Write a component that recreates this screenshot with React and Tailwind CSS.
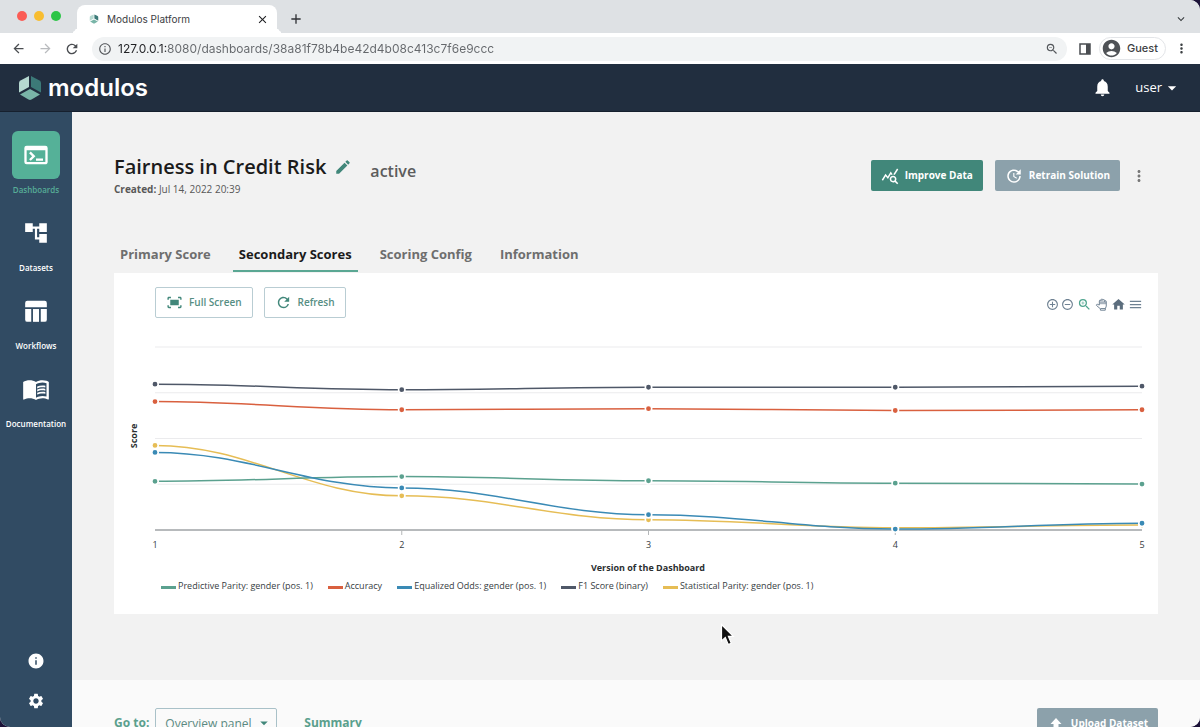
import { useState } from "react";
import {
  MdAccountCircle,
  MdAccountTree,
  MdAddCircleOutline,
  MdArrowBack,
  MdArrowDropDown,
  MdArrowForward,
  MdClose,
  MdEdit,
  MdExpandMore,
  MdFitScreen,
  MdHome,
  MdInfo,
  MdInfoOutline,
  MdMenu,
  MdMenuBook,
  MdMoreVert,
  MdNotifications,
  MdQueryStats,
  MdRefresh,
  MdRemoveCircleOutline,
  MdSettings,
  MdTerminal,
  MdUpdate,
  MdAdd,
  MdZoomIn,
  MdZoomOut,
} from "react-icons/md";

const navItems = [
  { label: "Dashboards", icon: MdTerminal, size: "size-7" },
  { label: "Datasets", icon: MdAccountTree, size: "size-[26px]" },
  { label: "Workflows", icon: TableIcon, size: "size-[26px]" },
  { label: "Documentation", icon: MdMenuBook, size: "size-7" },
];

const tabs = ["Primary Score", "Secondary Scores", "Scoring Config", "Information"];

const series = [
  { name: "Predictive Parity: gender (pos. 1)", color: "#5ba18f", data: [0.266, 0.292, 0.269, 0.256, 0.251] },
  { name: "Accuracy", color: "#d9603f", data: [0.702, 0.657, 0.663, 0.653, 0.657] },
  { name: "Equalized Odds: gender (pos. 1)", color: "#3a8ab5", data: [0.424, 0.23, 0.084, 0.005, 0.037] },
  { name: "F1 Score (binary)", color: "#4f5868", data: [0.797, 0.767, 0.78, 0.78, 0.786] },
  { name: "Statistical Parity: gender (pos. 1)", color: "#e6bd55", data: [0.462, 0.187, 0.056, 0.012, 0.027] },
];

// plot area inside the chart's viewBox
const LEFT = 41;
const RIGHT = 1028;
const BASE = 200;
const HEIGHT = 183;

const xAt = (i) => LEFT + ((RIGHT - LEFT) / 4) * i;
const yAt = (v) => BASE - v * HEIGHT;

const smoothPath = (data) =>
  data.reduce((d, v, i) => {
    if (i === 0) return `M${xAt(0)} ${yAt(v)}`;
    const bend = (xAt(1) - xAt(0)) * 0.38;
    return `${d} C${xAt(i - 1) + bend} ${yAt(data[i - 1])} ${xAt(i) - bend} ${yAt(v)} ${xAt(i)} ${yAt(v)}`;
  }, "");

function TableIcon({ className }) {
  return (
    <svg viewBox="0 0 24 24" fill="currentColor" className={className}>
      <path d="M2 8.500V4.500A2 2 0 0 1 4 2.500H20A2 2 0 0 1 22 4.500V8.500Z" />
      <path d="M2 10.200H7.600V22H4A2 2 0 0 1 2 20Z" />
      <path d="M9.200 10.200H14.800V22H9.200Z" />
      <path d="M16.400 10.200H22V20A2 2 0 0 1 20 22H16.400Z" />
    </svg>
  );
}

function HandIcon({ className }) {
  return (
    <svg viewBox="0 0 24 24" className={className}>
      <path
        d="M8 13V5.500a1.600 1.600 0 0 1 3.200 0V3.600a1.600 1.600 0 0 1 3.200 0V4.500a1.600 1.600 0 0 1 3.200 0V6.500a1.600 1.600 0 0 1 3.200 0V15L19 20V22.500H10V20L2.500 13.500C2 12 4 11 5.500 12Z"
        fill="#fff"
        stroke="currentColor"
        strokeWidth="1.800"
        strokeLinejoin="round"
      />
      <path d="M8.500 6H20.500V11.500H8.500Z" fill="currentColor" opacity="0.6" />
      <path d="M10 19.500H19" stroke="currentColor" strokeWidth="1.800" />
    </svg>
  );
}

function LogoMark({ className }) {
  return (
    <svg viewBox="0 0 24 26" className={className}>
      <path d="M11 1 2.500 5.500Q1 6.300 1 8V17.500L11 12Z" fill="#b5d8d0" />
      <path d="M13 1 21.500 5.500Q23 6.300 23 8V17.500L13 12Z" fill="#3c7a78" />
      <path d="M12 14 22 19.500 13.500 24.500Q12 25.300 10.500 24.500L2 19.500Z" fill="#79b5a8" />
    </svg>
  );
}

function BrowserBar() {
  return (
    <div className="shrink-0 font-['Inter',sans-serif] text-[#3c4043]">
      <div className="flex h-[33px] items-end bg-[#dee1e4] pl-[17px]">
        <div className="mb-3 flex gap-[7px]">
          <span className="size-[10px] rounded-full bg-[#fb5c55]" />
          <span className="size-[10px] rounded-full bg-[#f8bd30]" />
          <span className="size-[10px] rounded-full bg-[#2dc547]" />
        </div>
        <div className="relative ml-4 flex h-7 w-[200px] items-center rounded-t-lg bg-white px-3 before:absolute before:bottom-0 before:-left-2 before:size-2 before:rounded-br-lg before:shadow-[4px_4px_0_white] before:[clip-path:inset(0)] after:absolute after:-right-2 after:bottom-0 after:size-2 after:rounded-bl-lg after:shadow-[-4px_4px_0_white] after:[clip-path:inset(0)]">
          <LogoMark className="size-[10px]" />
          <span className="ml-2 text-[10px]">Modulos Platform</span>
          <button aria-label="Close tab" className="ml-auto -mr-1">
            <MdClose className="size-[13px] text-[#202124]" />
          </button>
        </div>
        <button aria-label="New tab" className="mb-[6px] ml-[11px]">
          <MdAdd className="size-4 text-[#303236]" />
        </button>
        <button aria-label="Search tabs" className="mr-3 mb-[7px] ml-auto">
          <MdExpandMore className="size-[14px]" />
        </button>
      </div>

      <div className="flex h-[31px] items-center bg-white pr-[11px] pl-[11px]">
        <button aria-label="Back">
          <MdArrowBack className="size-[15px] text-[#4a4d51]" />
        </button>
        <button aria-label="Forward" className="ml-3">
          <MdArrowForward className="size-[15px] text-[#b9bbbe]" />
        </button>
        <button aria-label="Reload" className="ml-[11px]">
          <MdRefresh className="size-4 text-[#4a4d51]" />
        </button>
        <div className="ml-3 flex h-6 flex-1 items-center rounded-full bg-[#f1f3f4] pr-2 pl-[6px]">
          <MdInfoOutline className="size-[14px] text-[#55585c]" />
          <input
            aria-label="Address"
            defaultValue="127.0.0.1:8080/dashboards/38a81f78b4be42d4b08c413c7f6e9ccc"
            className="ml-[6px] flex-1 bg-linear-to-r from-[#202124] from-[49px] to-[#65686c] to-[49px] bg-clip-text text-[12px] text-transparent outline-none"
          />
          <MdZoomOut className="size-[14px] text-[#55585c]" />
        </div>
        <button aria-label="Side panel" className="ml-3">
          <svg viewBox="0 0 12 12" className="size-3">
            <path d="M1 1H11V11H1Z" fill="none" stroke="#4a4d51" strokeWidth="1.500" />
            <path d="M7 1H11V11H7Z" fill="#4a4d51" />
          </svg>
        </button>
        <button className="ml-2 flex h-[23px] items-center rounded-full border border-[#e3e5e8] pr-[7px] pl-px text-[11px] font-medium">
          <MdAccountCircle className="mr-[5px] size-[21px] text-[#4f5256]" />
          Guest
        </button>
        <button aria-label="Browser menu" className="ml-2">
          <MdMoreVert className="size-[15px]" />
        </button>
      </div>
    </div>
  );
}

function Header() {
  return (
    <header className="flex h-12 shrink-0 items-center border-b border-[#16202e] bg-[#212e3f] pr-[18px] pl-[18px] text-white">
      <a href="#home" className="flex items-center">
        <LogoMark className="h-[26px] w-6" />
        <span className="ml-[6px] font-['Inter',sans-serif] text-[24px] leading-6 font-semibold">modulos</span>
      </a>
      <button aria-label="Notifications" className="ml-auto">
        <MdNotifications className="size-[21px]" />
      </button>
      <button className="ml-[22px] flex items-center text-[13px]">
        user
        <MdArrowDropDown className="size-5" />
      </button>
    </header>
  );
}

function Sidebar() {
  return (
    <nav className="flex w-[72px] shrink-0 flex-col items-center bg-[#314b63] pt-[19px] pb-[17px] text-white">
      <div className="flex flex-col gap-[11px]">
        {navItems.map(({ label, icon: Icon, size }, i) => (
          <a key={label} href={`#${label.toLowerCase()}`} className="flex flex-col items-center">
            <span
              className={
                i === 0
                  ? "flex size-12 items-center justify-center rounded-md bg-[#55b198]"
                  : "flex size-12 items-center justify-center"
              }
            >
              <Icon className={size} />
            </span>
            <span
              className={
                i === 0
                  ? "mt-[3px] text-[8px] leading-4 font-semibold text-[#57ad97]"
                  : "mt-[3px] text-[8px] leading-4 font-semibold"
              }
            >
              {label}
            </span>
          </a>
        ))}
      </div>
      <div className="mt-auto flex flex-col gap-[22px]">
        <a href="#info" aria-label="Info">
          <MdInfo className="size-[18px]" />
        </a>
        <a href="#settings" aria-label="Settings">
          <MdSettings className="size-[18px]" />
        </a>
      </div>
    </nav>
  );
}

function Chart() {
  // last series goes underneath the others
  const drawn = [series[4], series[0], series[1], series[2], series[3]];

  return (
    <svg viewBox="0 0 1044 224" className="block w-full" role="img" aria-label="Secondary scores by version">
      {[0.25, 0.5, 0.75, 1].map((v) => (
        <line key={v} x1={LEFT} x2={RIGHT} y1={yAt(v)} y2={yAt(v)} stroke="#ebebed" />
      ))}
      <line x1={LEFT} x2={RIGHT} y1={BASE} y2={BASE} stroke="#9fa3a6" strokeWidth="1.500" />
      {[1, 2, 3].map((i) => (
        <line key={i} x1={xAt(i)} x2={xAt(i)} y1={BASE} y2={BASE + 5} stroke="#b4b7b9" />
      ))}
      {drawn.map((s) => (
        <path key={s.name} d={smoothPath(s.data)} fill="none" stroke={s.color} strokeWidth="1.500" />
      ))}
      {drawn.map((s) =>
        s.data.map((v, i) => (
          <circle
            key={`${s.name}-${i}`}
            cx={xAt(i)}
            cy={yAt(v)}
            r="3.200"
            fill={s.color}
            stroke="#fff"
            strokeWidth="1.600"
          />
        ))
      )}
      {[1, 2, 3, 4, 5].map((n, i) => (
        <text key={n} x={xAt(i)} y="218" textAnchor="middle" fontSize="9" fill="#373d3f">
          {n}
        </text>
      ))}
      <text
        x="23"
        y="106"
        textAnchor="middle"
        fontSize="9"
        fontWeight="700"
        fill="#2b2f31"
        transform="rotate(-90 23 106)"
      >
        Score
      </text>
    </svg>
  );
}

function ChartTools() {
  return (
    <div className="mt-1 flex items-center gap-[2px] text-[#6e8192]">
      <button aria-label="Zoom in">
        <MdAddCircleOutline className="size-[13px]" />
      </button>
      <button aria-label="Zoom out">
        <MdRemoveCircleOutline className="size-[13px]" />
      </button>
      <button aria-label="Selection zoom" className="ml-px">
        <MdZoomIn className="size-[15px] text-[#4fa58f]" />
      </button>
      <button aria-label="Pan" className="ml-px">
        <HandIcon className="size-[13px]" />
      </button>
      <button aria-label="Reset zoom" className="ml-px">
        <MdHome className="size-[15px] text-[#5b6d7d]" />
      </button>
      <button aria-label="Chart menu">
        <MdMenu className="size-[15px]" />
      </button>
    </div>
  );
}

export default function App() {
  const [tab, setTab] = useState("Secondary Scores");

  return (
    <div className="h-screen bg-[#1c1238]">
      <div className="relative flex h-full flex-col overflow-hidden rounded-tr-[10px] rounded-b-[10px] bg-[#f2f2f2] font-['Open_Sans',sans-serif]">
        <BrowserBar />
        <Header />

        <div className="flex min-h-0 flex-1">
          <Sidebar />

          <main className="min-w-0 flex-1 overflow-hidden">
            <section className="px-[42px] pt-[41px] pb-[66px]">
              <div className="flex items-start">
                <div>
                  <div className="flex h-7 items-center">
                    <h1 className="text-[20px] font-semibold text-[#1b1b1b]">Fairness in Credit Risk</h1>
                    <button aria-label="Rename" className="ml-2">
                      <MdEdit className="size-[18px] text-[#41877a]" />
                    </button>
                  </div>
                  <p className="text-[10px] leading-4 text-[#585858]">
                    <b className="font-bold">Created:</b> Jul 14, 2022 20:39
                  </p>
                </div>
                <span className="mt-[6px] ml-[18px] text-[16px] leading-6 font-semibold text-[#5c5c5c]">active</span>
                <div className="mt-[7px] ml-auto flex items-center">
                  <button className="flex h-[31px] items-center gap-[6px] rounded-xs bg-[#41877a] px-[10px] text-[10px] font-bold text-white">
                    <MdQueryStats className="size-[18px]" />
                    Improve Data
                  </button>
                  <button className="ml-3 flex h-[31px] items-center gap-[6px] rounded-xs bg-[#8ca1ab] px-[10px] text-[10px] font-bold text-white">
                    <MdUpdate className="size-[18px]" />
                    Retrain Solution
                  </button>
                  <button aria-label="More actions" className="mr-[10px] ml-[10px]">
                    <MdMoreVert className="size-[18px] text-[#777]" />
                  </button>
                </div>
              </div>

              <div role="tablist" className="mt-10 flex gap-4">
                {tabs.map((t) => (
                  <button
                    key={t}
                    role="tab"
                    aria-selected={t === tab}
                    onClick={() => setTab(t)}
                    className={
                      t === tab
                        ? "h-[35px] border-b-2 border-[#5aa793] px-[6px] pt-[2px] text-[13px] font-bold text-[#1b1b1b]"
                        : "h-[35px] border-b-2 border-transparent px-[6px] pt-[2px] text-[13px] font-bold text-[#6e6e6e]"
                    }
                  >
                    {t}
                  </button>
                ))}
              </div>

              <div className="mt-px bg-white pt-[14px] pb-5">
                <div className="flex items-center pr-[15px] pl-[41px] text-[10px] font-semibold text-[#568e83]">
                  <button className="flex h-[31px] items-center gap-[6px] rounded-xs border border-[#b9cdd3] px-[10px]">
                    <MdFitScreen className="size-[17px] text-[#41877a]" />
                    Full Screen
                  </button>
                  <button className="ml-[11px] flex h-[31px] items-center gap-[6px] rounded-xs border border-[#b9cdd3] px-[10px]">
                    <MdRefresh className="size-[17px] text-[#41877a]" />
                    Refresh
                  </button>
                  <div className="ml-auto">
                    <ChartTools />
                  </div>
                </div>

                <div className="mt-3">
                  <Chart />
                </div>

                <p className="mt-2 pl-6 text-center text-[9px] leading-3 font-bold text-[#2b2f31]">
                  Version of the Dashboard
                </p>
                <ul className="mt-1 flex flex-wrap gap-x-[15px] pr-4 pl-[47px] text-[9px] leading-4 text-[#373d3f]">
                  {series.map((s) => (
                    <li key={s.name} className="flex items-center gap-[2px]">
                      <span className="mt-[3px] h-[3px] w-[15px]" style={{ backgroundColor: s.color }} />
                      {s.name}
                    </li>
                  ))}
                </ul>
              </div>
            </section>

            <section className="flex items-start bg-[#fafafa] px-[42px] pt-7 pb-10 text-[12px] text-[#5aa08d]">
              <label htmlFor="goto" className="mr-[6px] leading-[30px] font-bold">
                Go to:
              </label>
              <div className="relative">
                <select
                  id="goto"
                  className="h-[31px] w-[122px] appearance-none rounded-xs border border-[#a9c1c8] bg-transparent pl-[9px] text-[12px] text-[#5b8a82]"
                >
                  <option>Overview panel</option>
                </select>
                <MdArrowDropDown className="pointer-events-none absolute top-[6px] right-1 size-[18px] text-[#41877a]" />
              </div>
              <a href="#summary" className="ml-[27px] leading-[30px] font-bold">
                Summary
              </a>
              <button className="ml-auto flex h-[31px] items-center gap-[6px] rounded-xs bg-[#8ca1ab] px-[10px] text-[10px] font-bold text-white">
                <svg viewBox="0 0 18 18" className="size-[18px]" fill="currentColor">
                  <path d="M9 3 14.500 9H11.500V15H6.500V9H3.500Z" />
                </svg>
                Upload Dataset
              </button>
            </section>
          </main>
        </div>

        <svg viewBox="0 0 16 24" className="pointer-events-none absolute top-[623px] left-[720px] h-6 w-4">
          <path
            d="M1.500 1.500V18L5.300 14.500 8.200 21.500 11.300 20.200 8.400 13.400H13.300Z"
            fill="#111"
            stroke="#fff"
            strokeWidth="1.200"
          />
        </svg>
      </div>
    </div>
  );
}
